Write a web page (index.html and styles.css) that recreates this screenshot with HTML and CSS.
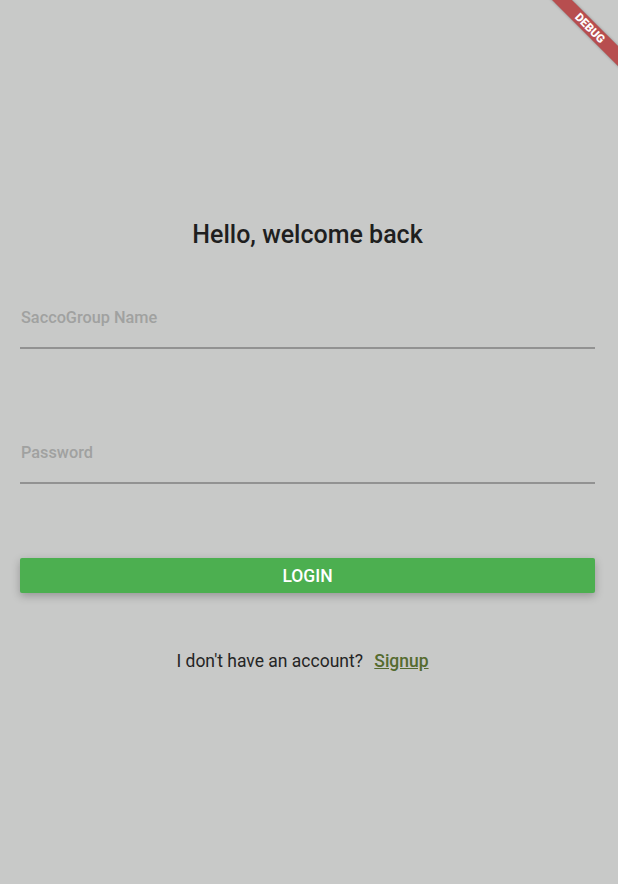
FILE: index.html
```html
<!DOCTYPE html>
<html>
<head>
<meta charset="utf-8">
<link rel="stylesheet" href="styles.css">
</head>
<body>
<div class="screen">
  <main class="form">
    <h1 class="title">Hello, welcome back</h1>
    <div class="field field-first"><span class="hint">SaccoGroup Name</span></div>
    <div class="field field-second"><span class="hint">Password</span></div>
    <button class="login">LOGIN</button>
    <p class="footer">I don't have an account? <a class="signup">Signup</a></p>
  </main>
  <div class="banner">DEBUG</div>
</div>
</body>
</html>
```
FILE: styles.css
```css
html, body {
  margin: 0;
  padding: 0;
  background: #c8c9c8;
}
.screen {
  position: relative;
  width: 618px;
  height: 884px;
  overflow: hidden;
  font-family: Roboto, "Noto Sans", sans-serif;
}
.form {
  display: flex;
  flex-direction: column;
  padding: 0 23px 0 20px;
}
.title {
  margin: 219px 0 0;
  font-size: 25px;
  font-weight: 500;
  line-height: 32px;
  text-align: center;
  color: #1f1f1f;
}
.field {
  height: 39px;
  border-bottom: 2px solid #929292;
  display: flex;
  align-items: flex-start;
}
.field-first { margin-top: 57px; }
.field-second { margin-top: 94px; }
.hint {
  font-size: 16.3px;
  font-weight: 500;
  color: #a0a1a0;
  line-height: 20px;
  padding-left: 1px;
}
.login {
  margin-top: 74px;
  height: 35px;
  border: none;
  border-radius: 2px;
  background: #4caf50;
  color: #fff;
  font-family: Roboto, sans-serif;
  font-size: 17.5px;
  font-weight: 500;
  box-shadow: 0 3px 8px rgba(0,0,0,0.25);
  padding: 0;
}
.footer {
  margin: 57px 0 0;
  padding-right: 10px;
  text-align: center;
  font-size: 17.5px;
  line-height: 22px;
  color: #252525;
}
.signup {
  margin-left: 7px;
  color: #556b2f;
  font-weight: 500;
  text-decoration: underline;
}
.banner {
  position: absolute;
  left: 530px;
  top: 21px;
  width: 120px;
  height: 14px;
  transform: rotate(45deg);
  background: rgba(176, 30, 32, 0.72);
  color: #fff;
  font-family: Roboto, sans-serif;
  font-size: 11.5px;
  font-weight: 900;
  line-height: 14px;
  text-align: center;
  box-shadow: 0 0 3px rgba(0,0,0,0.3);
}
```
